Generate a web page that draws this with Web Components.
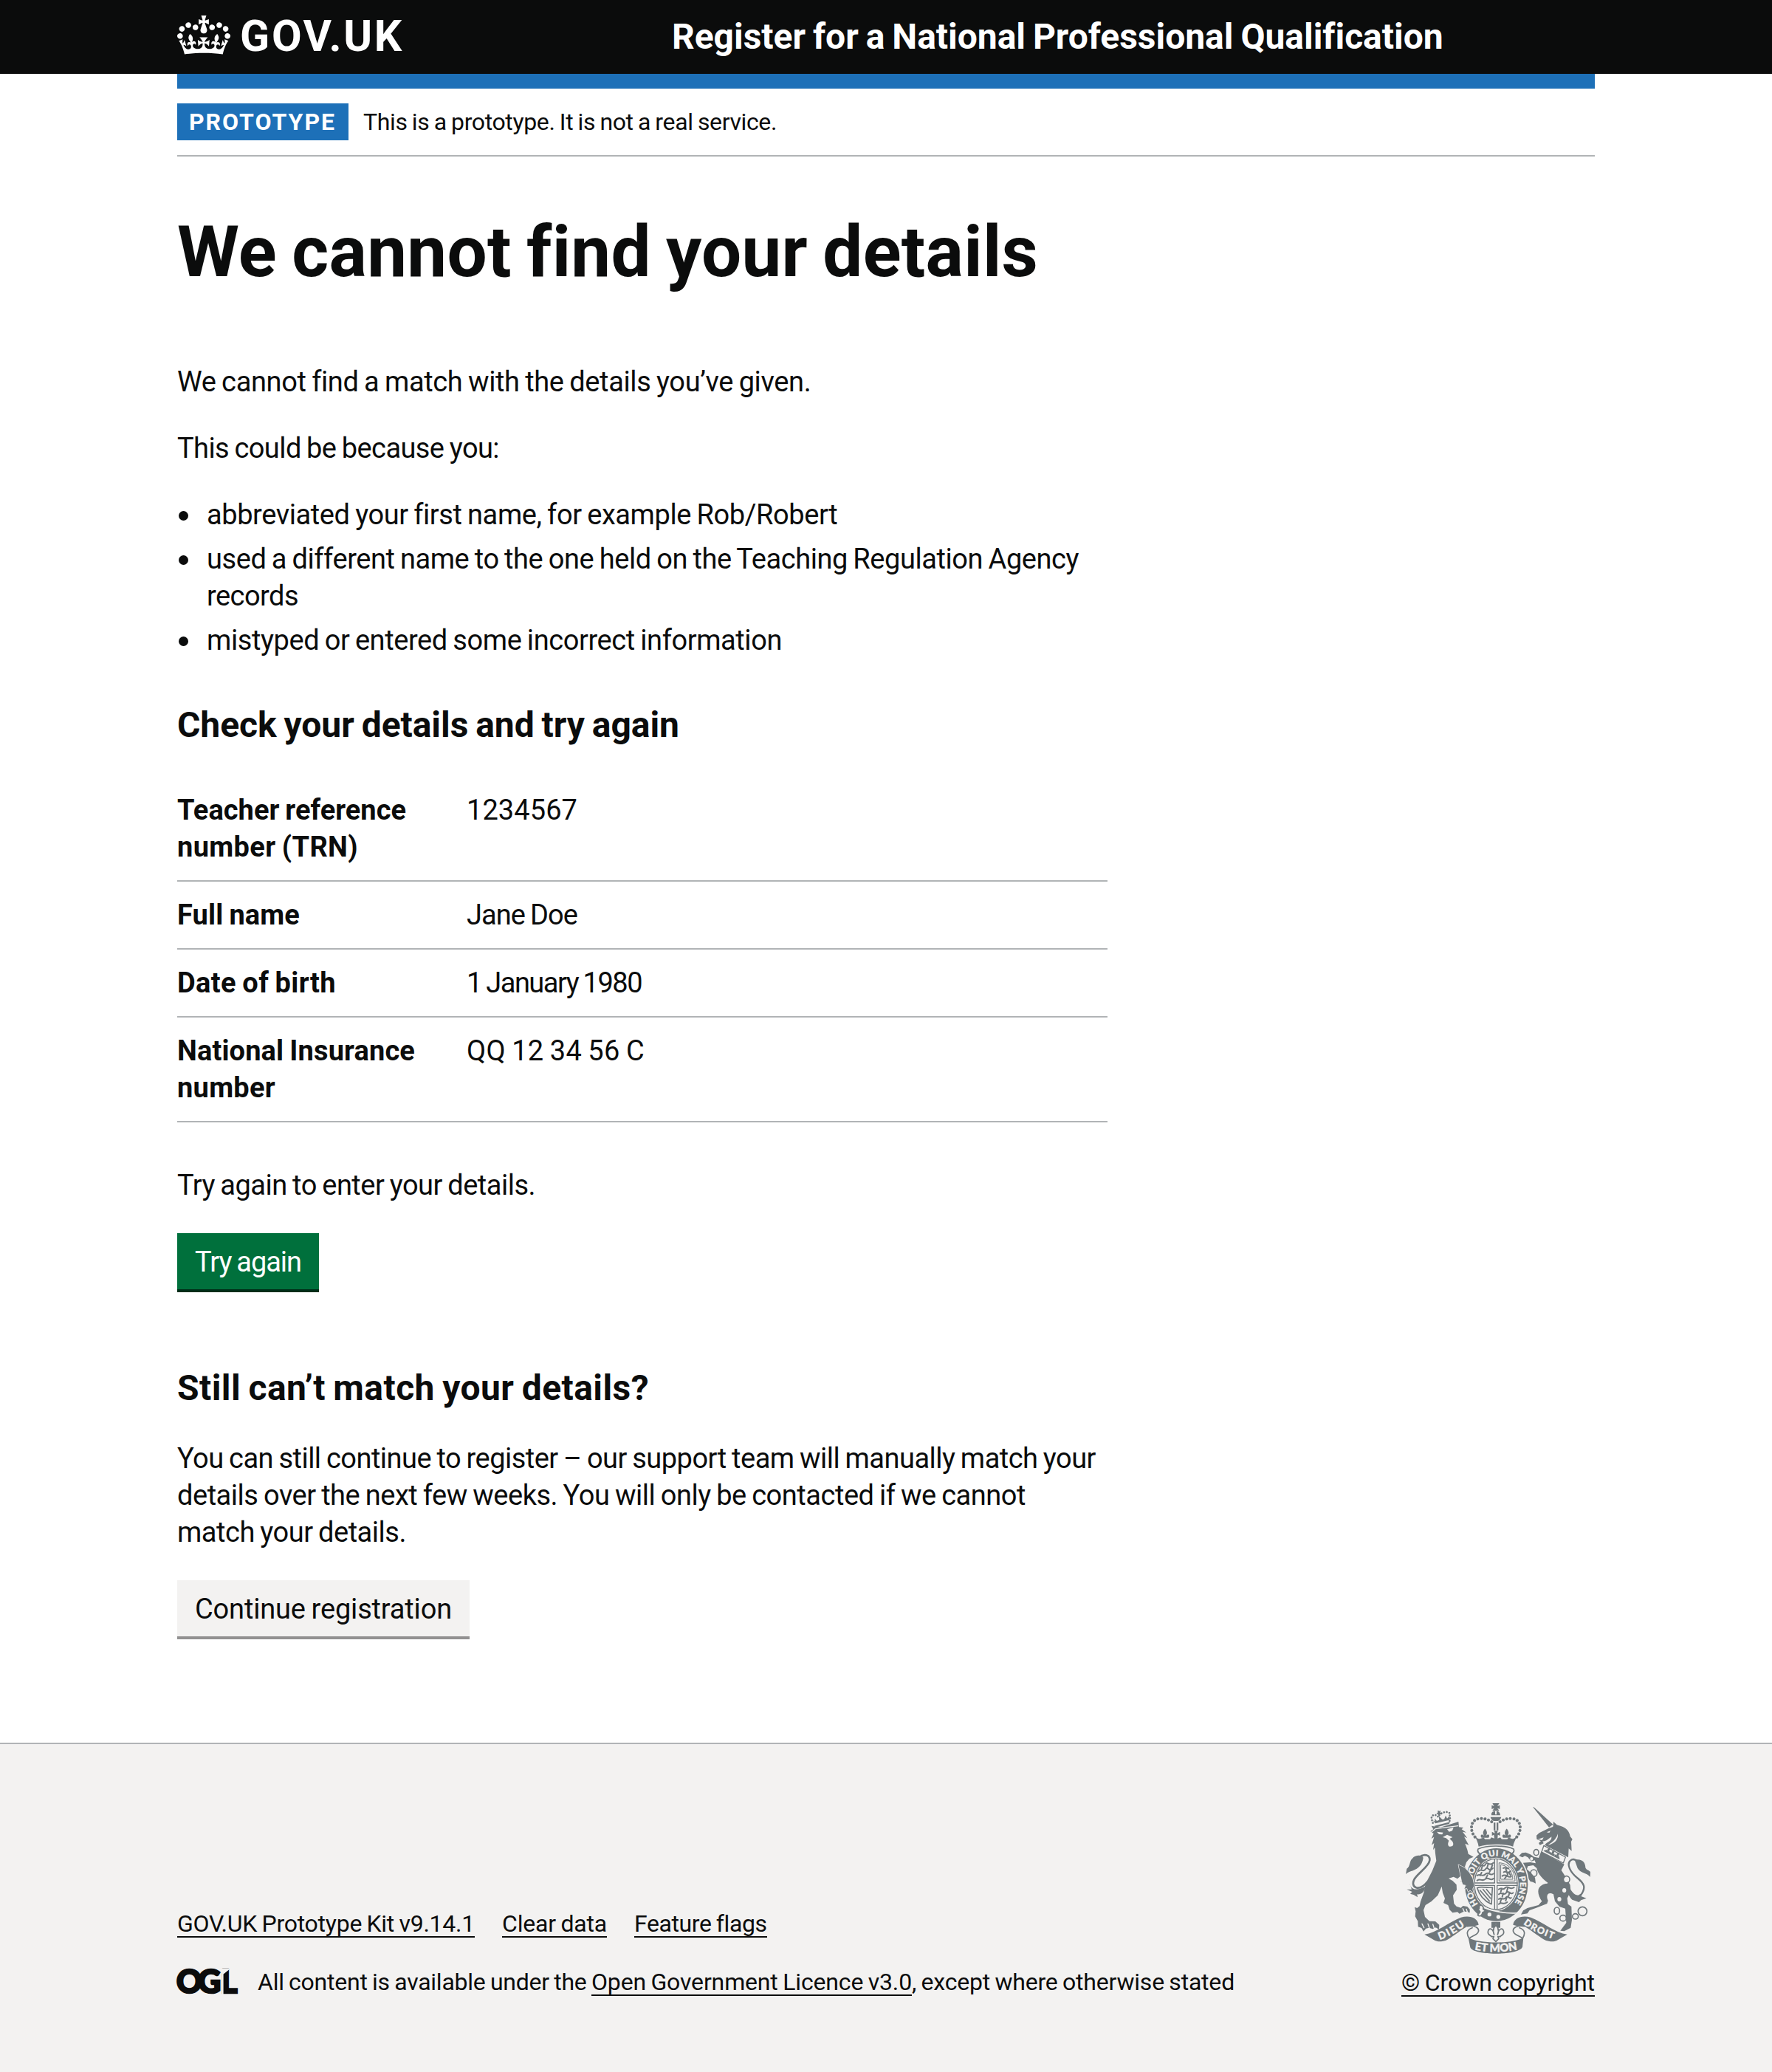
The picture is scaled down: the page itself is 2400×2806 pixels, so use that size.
<!DOCTYPE html>
<html lang="en">
<head>
<meta charset="utf-8">
<title>We cannot find your details – Register for a National Professional Qualification</title>
<style>
html { background: #f3f2f1; }
body { margin: 0; background: #fff; color: #0b0c0c; font-family: Roboto, "Liberation Sans", sans-serif; font-size: 38px; line-height: 50px; }
</style>
</head>
<body>
<npq-page></npq-page>
<script>
function define(name, html) {
  const template = document.createElement('template');
  template.innerHTML = html;
  customElements.define(name, class extends HTMLElement {
    connectedCallback() {
      if (this.shadowRoot) return;
      this.attachShadow({ mode: 'open' }).append(template.content.cloneNode(true));
    }
  });
}

define('crown-mark', `
<style>:host{display:block;width:72px;height:53px}svg{display:block;width:72px;height:53px}</style>
<svg viewBox="0 0 132 97" fill="#fff" aria-hidden="true"><path fill-rule="evenodd" d="M25 30.2c3.5 1.5 7.7-.2 9.1-3.7 1.5-3.6-.2-7.8-3.9-9.2-3.6-1.4-7.6.3-9.1 3.9-1.4 3.5.3 7.5 3.9 9zM9 39.5c3.6 1.5 7.8-.2 9.2-3.7 1.5-3.6-.2-7.8-3.9-9.1-3.6-1.5-7.6.2-9.1 3.8-1.4 3.5.3 7.5 3.8 9zM4.4 57.2c3.5 1.5 7.7-.2 9.1-3.8 1.5-3.6-.2-7.7-3.9-9.1-3.5-1.5-7.6.3-9.1 3.8-1.4 3.5.3 7.6 3.9 9.1zm38.3-21.4c3.5 1.5 7.7-.2 9.1-3.8 1.5-3.6-.2-7.7-3.9-9.1-3.6-1.5-7.6.3-9.1 3.8-1.3 3.6.4 7.7 3.9 9.1zm64.4-5.6c-3.6 1.5-7.8-.2-9.1-3.7-1.5-3.6.2-7.8 3.8-9.2 3.6-1.4 7.7.3 9.2 3.9 1.3 3.5-.4 7.5-3.9 9zm15.9 9.3c-3.6 1.5-7.7-.2-9.1-3.7-1.5-3.6.2-7.8 3.7-9.1 3.6-1.5 7.7.2 9.2 3.8 1.5 3.5-.3 7.5-3.8 9zm4.7 17.7c-3.6 1.5-7.8-.2-9.2-3.8-1.5-3.6.2-7.7 3.9-9.1 3.6-1.5 7.7.3 9.2 3.8 1.3 3.5-.4 7.6-3.9 9.1zM89.3 35.8c-3.6 1.5-7.8-.2-9.2-3.8-1.4-3.6.2-7.7 3.9-9.1 3.6-1.5 7.7.3 9.2 3.8 1.4 3.6-.3 7.7-3.9 9.1zM69.7 17.7l8.9 4.7V9.3l-8.9 2.8c-.2-.3-.5-.6-.9-.9L72.4 0H59.6l3.5 11.2c-.3.3-.6.5-.9.9l-8.8-2.8v13.1l8.8-4.7c.3.3.6.7.9.9l-5 15.4v.1c-.2.8-.4 1.6-.4 2.4 0 4.1 3.1 7.5 7 8.1h.2c.3 0 .7.1 1 .1.4 0 .7 0 1-.1h.2c4-.6 7.1-4.1 7.1-8.1 0-.8-.1-1.7-.4-2.4V34l-5.1-15.4c.4-.2.7-.6 1-.9zM66 92.8c16.9 0 32.8 1.1 47.1 3.2 4-16.9 8.9-26.7 14-33.5l-9.6-3.4c1 4.9 1.1 7.2 0 10.2-1.5-1.4-3-4.3-4.2-8.7L108.6 76c2.8-2 5-3.2 7.5-3.3-4.4 9.4-10 11.9-13.6 11.2-4.3-.8-6.3-4.6-5.6-7.9 1-4.7 5.7-5.9 8-.5 4.3-8.7-3-11.4-7.6-8.8 7.1-7.2 7.9-13.5 2.1-21.1-8 6.1-8.1 12.3-4.5 20.8-4.7-5.4-12.1-2.5-9.5 6.2 3.4-5.2 7.9-2 7.2 3.1-.6 4.3-6.4 7.8-13.5 7.2-10.3-.9-10.9-8-11.2-13.8 2.5-.5 7.1 1.8 11 7.3L80.2 60c-4.1 4.4-8 5.3-12.3 5.4 1.4-4.4 8-11.6 8-11.6H55.5s6.4 7.2 7.9 11.6c-4.2-.1-8-1-12.3-5.4l1.4 16.4c3.9-5.5 8.5-7.7 10.9-7.3-.3 5.8-.9 12.8-11.1 13.8-7.2.6-12.9-2.9-13.5-7.2-.7-5 3.8-8.3 7.1-3.1 2.7-8.7-4.6-11.6-9.4-6.2 3.7-8.5 3.6-14.7-4.6-20.8-5.8 7.6-5 13.9 2.2 21.1-4.7-2.6-11.9.1-7.7 8.8 2.3-5.5 7.1-4.2 8.1.5.7 3.3-1.3 7.1-5.7 7.9-3.5.7-9-1.8-13.5-11.2 2.5.1 4.7 1.3 7.5 3.3l-4.7-15.4c-1.2 4.4-2.7 7.2-4.3 8.7-1.1-3-.9-5.3 0-10.2l-9.5 3.4c5 6.9 9.9 16.7 14 33.5 14.8-2.1 30.8-3.2 47.7-3.2z"/></svg>`);

define('site-header', `
<style>
:host{display:block;background:#0b0c0c;color:#fff;height:100px}
.in{width:1920px;margin:0 auto;display:grid;grid-template-columns:670px 1fr;height:100px}
.logo{display:flex;align-items:flex-start;gap:13px;padding-top:21px}
.word{font-weight:700;font-size:59px;line-height:60px;margin-top:-2px}
.title{font-weight:700;font-size:48px;line-height:60px;padding-top:20px}
</style>
<div class="in"><div class="logo"><crown-mark></crown-mark><span class="word"><fit-line w="222">GOV.UK</fit-line></span></div>
<div class="title"><fit-line w="1044">Register for a National Professional Qualification</fit-line></div></div>`);

define('phase-banner', `
<style>
:host{display:flex;width:1920px;margin:0 auto;box-sizing:border-box;border-top:20px solid #1d70b8;border-bottom:2px solid #b1b4b6;padding:20px 0;font-size:32px;line-height:50px;gap:20px}
b{background:#1d70b8;color:#fff;width:232px;box-sizing:border-box;padding-left:16px;height:50px}
</style><b><fit-line w="199">PROTOTYPE</fit-line></b><slot></slot>`);

define('summary-row', `
<style>
:host{display:grid;grid-template-columns:392px 1fr;padding:20px 0;border-bottom:2px solid #b1b4b6}
:host(:first-child){padding-top:0}
.k{font-weight:700}
</style><div class="k"><slot name="key"></slot></div><div><slot></slot></div>`);

define('govuk-button', `
<style>
:host{display:block;width:fit-content;height:76px;box-sizing:border-box;padding:14px 24px 12px;background:#00703c;color:#fff;box-shadow:0 4px 0 #002d18}
:host([secondary]){background:#f3f2f1;color:#0b0c0c;box-shadow:0 4px 0 #929191}
</style><slot></slot>`);

define('bullet-item', `
<style>
:host{display:flex}
i{width:13px;height:13px;border-radius:50%;background:currentColor;margin:20px 25px 0 2px;flex:none}
</style><i></i><div><slot></slot></div>`);

define('ogl-logo', `
<style>:host{display:block;width:83px;height:36px}svg{display:block;overflow:visible}text{font:900 43px Lato,sans-serif;fill:#0b0c0c;stroke:#0b0c0c;stroke-width:2.6px}</style>
<svg width="84" height="36" viewBox="0 0 84 36"><text x="-1 28 59" y="33">OGL</text><path fill="#f3f2f1" d="M59 0H72L62.6 7.5V35H60.8V8Z"/></svg>`);

define('royal-arms', `
<style>:host{display:block;width:250px;height:204px}svg{display:block;overflow:visible}
text{font-family:Lato,"Noto Sans",sans-serif;font-weight:900;fill:#f3f2f1}</style>
<svg width="250" height="204" viewBox="72 66 750 612" fill="#6f777b" stroke-linejoin="round" stroke-linecap="round" aria-hidden="true">
<defs>
<path id="belt" d="M438 513A98 116 0 0 1 340 397A98 116 0 0 1 438 281A98 116 0 0 1 536 397A98 116 0 0 1 438 513"/>
<path id="dieu" d="M210 621Q262 604 322 557"/>
<path id="droit" d="M549 556Q590 590 680 621"/>
<path id="mon" d="M345 660Q438 680 531 660"/>
<g id="fleur"><path d="M0-22C9-12 9-3 3 4C12-6 20 2 13 11H-13C-20 2-12-6-3 4C-9-3-9-12 0-22Z"/></g>
</defs>
<!-- lion -->
<path d="M172 180L184 172 176 158 213 164 286 141 288 163 306 165 299 172 318 185 303 182 322 208 309 202 328 236 313 230 322 255 326 272 347 284 330 292 318 306 312 324 327 348 342 372 348 402 342 414 345 427 333 418 326 424 322 410 311 412 318 399 306 396 302 386 295 383 302 373 294 362 282 373 266 365 246 372 262 381 278 397 279 418 264 440 268 474 278 485 296 491 304 483 322 486 332 497 332 511 318 506 304 508 290 515 282 508 262 511 250 499 244 480 225 471 231 453 222 430 218 404 202 440 176 465 152 480 144 500 150 528 168 545 192 546 208 560 207 579 194 571 182 577 166 572 154 575 144 587 136 573 122 568 121 545 110 526 112 505 108 488 118 492 128 484 132 466 145 430 152 394 180 340 196 300 192 270 190 246 183 256 187 228 177 236 187 203 176 210 185 190Z"/>
<path fill="#f3f2f1" d="M198 182L224 185 220 193 207 192ZM240 172L266 164 261 178 248 182ZM222 204L240 194 262 204 250 210 262 222C270 238 260 243 250 242C240 238 244 226 247 218L236 208Z"/>
<path fill="none" stroke="#f3f2f1" stroke-width="4" d="M176 184L192 170 284 158M162 556L168 574M182 558L188 576M138 556L146 572M304 494L310 508M318 496L322 508"/>
<path d="M188 158L252 142 248 150 194 164ZM182 136L192 148 249 134 250 118 240 128 234 116 228 131 220 132 206 118 208 134 198 138 190 128 190 140Z"/>
<path fill="none" stroke="#6f777b" stroke-width="8" stroke-dasharray=".1 11" d="M182 146L176 128C178 112 192 108 204 122C208 108 236 94 250 106L252 128L250 138"/>
<path d="M202 95L210 98 214 95 212 104 218 106 212 111 208 118 202 111 196 108 202 104Z"/>
<path fill="none" stroke="#6f777b" stroke-width="8" d="M160 385C125 428 90 408 106 376C120 350 166 324 169 298C171 274 145 270 125 286"/>
<path d="M143 288C140 276 112 274 99 290C85 302 92 320 76 332L72 355C82 340 104 344 124 326C138 314 140 302 143 288ZM88 392C94 422 122 420 152 404C148 426 134 438 118 436L120 448 104 438 90 434 98 426 76 416 96 416Z"/>
<!-- unicorn -->
<path d="M588 81L594 83 670 152 654 164ZM652 168L670 162 672 141 686 154 700 158C724 164 738 182 740 201L749 212 744 222 746 260 734 250 732 286 637 236C645 222 666 222 664 202C650 212 642 222 628 220L632 229 617 236 612 228 621 220 604 212 603 197 614 187Z"/>
<path fill="#f3f2f1" d="M644 184L660 178 655 186ZM690 190C692 212 680 230 650 236C672 222 684 210 690 190ZM608 213L632 205 626 216Z"/>
<path d="M622 262L716 314 704 338 723 368 740 398 742 424 728 452 731 476 745 486 747 540 742 572 716 586 700 584 712 568 724 552 720 494 696 486 678 464 672 436C650 424 640 440 650 462L646 474 606 490 575 501 566 514 540 518 549 502 566 492 611 480 625 464C608 440 602 410 626 398C638 392 644 394 650 390C620 368 606 345 604 330L590 318 568 322 564 334 582 350 597 368 600 392 588 386 578 384 566 366 557 352 546 330 548 308 578 306 600 310 596 298 582 302 568 286 556 280 546 286 532 280 544 268 560 266 578 274 594 284 612 288Z"/>
<path fill="#f3f2f1" stroke="#6f777b" stroke-width="4" d="M633 238L721 285 712 309 624 264Z"/>
<g transform="translate(650 259) rotate(28) scale(.68)"><use href="#fleur"/><use href="#fleur" x="31"/><use href="#fleur" x="63"/><path d="M-22 8H84V14H-22Z"/></g>
<path fill="none" stroke="#6f777b" stroke-width="7" d="M783 440C806 408 796 392 772 372C738 346 724 312 742 298C750 291 762 295 772 304"/>
<path d="M758 296C790 290 802 308 802 328C805 338 818 338 822 346L821 366C808 346 784 354 770 330ZM728 390C742 420 754 440 772 440L790 430 784 444 806 452 784 460 776 468 748 458C734 446 728 426 728 390Z"/>
<g fill="none" stroke="#6f777b" stroke-width="5"><ellipse cx="602" cy="266" rx="10" ry="12"/><ellipse cx="592" cy="350" rx="13" ry="14"/><ellipse cx="725" cy="376" rx="13" ry="14"/><ellipse cx="686" cy="503" rx="11" ry="14"/><ellipse cx="711" cy="533" rx="13" ry="12"/><ellipse cx="761" cy="526" rx="12" ry="11"/><circle cx="790" cy="505" r="18"/></g>
<g fill="#f3f2f1"><ellipse cx="725" cy="376" rx="10" ry="11"/><ellipse cx="716" cy="420" rx="8" ry="9"/><ellipse cx="696" cy="456" rx="8" ry="9"/><ellipse cx="583" cy="292" rx="6" ry="7"/></g>
<!-- garter and shield -->
<ellipse cx="440" cy="397" rx="133" ry="153" fill="#f3f2f1"/>
<path fill="#f3f2f1" stroke="#6f777b" stroke-width="5" d="M366 252C400 236 476 236 510 252Q516 264 500 274M366 252Q360 264 376 274"/>
<ellipse cx="440" cy="397" rx="128" ry="148"/>
<ellipse cx="438" cy="395" rx="92" ry="108" fill="#f3f2f1"/>
<ellipse cx="438" cy="395" rx="87" ry="103" fill="none" stroke="#6f777b" stroke-width="4"/>
<path fill="none" stroke="#6f777b" stroke-width="4" d="M433 293V390H351M443 293V390H525M351 400H433V496M443 496V400H525"/>
<g fill="none" stroke="#6f777b" stroke-width="6">
<path d="M374 322C382 308 388 330 396 314S408 326 428 308M368 342C378 328 386 350 396 334S410 350 426 330M362 360C374 350 384 368 396 354S414 366 428 352M362 380C374 370 384 386 396 374S414 386 428 372M384 318L380 332M406 316L402 330M418 334L412 346M380 348L374 360M404 358L398 370M424 318L418 332"/>
<path stroke-width="3" d="M452 308C492 310 515 340 516 382H452ZM459 316C486 318 506 346 507 375H459Z"/>
<path d="M468 330C480 322 484 336 490 330M470 346C478 338 484 356 498 342M464 362C480 350 486 372 500 364M478 332L486 356 474 372M492 350L498 358"/>
<path stroke-width="5" d="M362 410C380 402 400 412 424 408L420 476C398 466 374 450 362 410M374 420L412 464M386 416L416 452M400 416L418 438"/>
<path d="M450 416C460 404 466 424 476 410S494 422 512 408M450 436C460 424 470 444 480 430S496 442 508 430M450 456C460 444 468 464 478 450S494 460 500 450M450 476C460 464 468 482 484 468M462 412L458 426M486 412L482 426M468 432L464 446M494 428L490 442M460 456L456 468M482 450L478 462"/></g>
<text font-size="34" stroke="#f3f2f1" stroke-width="1"><textPath href="#belt" startOffset="84" textLength="56">HO</textPath></text>
<text font-size="34" stroke="#f3f2f1" stroke-width="1"><textPath href="#belt" startOffset="190" textLength="392">SOIT QUI MAL Y PENSE</textPath></text>
<path stroke="#f3f2f1" stroke-width="4" paint-order="stroke" d="M286 316L310 328 328 346 343 370 350 402 343 414 346 428 333 419 326 426 321 412 310 413 317 399 304 396 300 384Z"/>
<path fill="none" stroke="#f3f2f1" stroke-width="5" d="M374 482C406 500 470 516 524 512"/>
<path fill="#f3f2f1" stroke="#6f777b" stroke-width="5" d="M372 482C382 476 390 490 386 496L396 504 384 510C382 524 372 528 364 520L374 508 366 496C376 494 366 488 372 482Z"/>
<g fill="#f3f2f1"><circle cx="412" cy="518" r="8"/><circle cx="448" cy="528" r="8"/></g>
<!-- crown -->
<path d="M424 66H452L444 78 454 74V90L444 86 452 97H424L431 86 421 90V74L431 78ZM420 108C422 98 434 98 435 98V112H441V98C450 98 455 104 456 115H420ZM416 122H460C456 136 448 138 438 138S420 136 416 122Z"/>
<path fill="none" stroke="#6f777b" stroke-width="12" stroke-dasharray=".1 14.6" d="M353 203C330 175 334 130 375 128C396 128 410 134 422 142M523 203C546 175 542 130 501 128C480 128 466 134 454 142"/>
<path d="M429 145H436V176H429ZM441 145H448V176H441ZM352 196C362 216 376 212 388 205L394 212H414L420 205 432 209 430 194 422 198V182L434 188 431 178H446L443 188 455 182V198L446 194 445 209 456 205 462 212H484L490 205C502 212 514 216 524 196C518 216 510 226 508 242C470 230 406 230 368 242C366 226 358 212 352 196Z"/>
<use href="#fleur" transform="translate(394 194) scale(1.1)"/><use href="#fleur" transform="translate(482 194) scale(1.1)"/>
<!-- ribbon -->
<path d="M148 599C196 594 246 548 296 530C330 520 364 530 368 560L346 566 322 566C290 584 256 614 234 624C214 630 200 628 192 625Z"/>
<path d="M728 599C680 594 630 548 580 530C546 520 512 530 508 560L530 566 554 566C586 584 620 614 642 624C662 630 676 628 684 625Z"/>
<path fill="#f3f2f1" stroke="#6f777b" stroke-width="5" d="M322 566C350 560 374 572 366 590C358 606 336 604 330 616C318 598 318 580 342 572M554 566C526 560 502 572 510 590C518 606 540 604 546 616C558 598 558 580 534 572"/>
<path d="M326 612C366 638 510 638 550 612L546 650C530 686 346 686 334 652Z"/>
<text font-size="42" stroke="#f3f2f1" stroke-width="1"><textPath href="#dieu" textLength="118">DIEU</textPath></text>
<text font-size="38" stroke="#f3f2f1" stroke-width="1"><textPath href="#droit" textLength="136">DROIT</textPath></text>
<text font-size="45" stroke="#f3f2f1" stroke-width="1"><textPath href="#mon" startOffset="6" textLength="176">ET MON</textPath></text>
<!-- pendant fleur-de-lis -->
<path d="M420 548H456V572H447L438 556 429 572H420Z"/>
<path fill="#f3f2f1" stroke="#6f777b" stroke-width="5" d="M438 560C452 576 450 588 445 600C450 572 468 570 470 588C472 602 458 602 456 608H446L450 616 438 628 426 616 430 608H420C418 602 404 602 406 588C408 570 426 572 431 600C426 588 424 576 438 560Z"/>
</svg>`);

define('site-footer', `
<style>
:host{display:block;background:#f3f2f1;border-top:2px solid #b1b4b6;height:444px;font-size:32px;line-height:40px}
.in{width:1920px;margin:0 auto;display:flex;justify-content:space-between;padding-top:80px}
.left{display:flex;flex-direction:column;gap:40px;padding-top:143px}
.links{display:flex;gap:37px}
.lic{display:flex}
ogl-logo{margin:2px 26px 0 0}
.a{border-bottom:2px solid #0b0c0c;height:39px;display:inline-block;box-sizing:border-box}
.right{display:flex;flex-direction:column;align-items:center;width:262px}
.right .a{margin-top:19px}
</style>
<div class="in"><div class="left">
<div class="links"><span class="a"><fit-line w="403">GOV.UK Prototype Kit v9.14.1</fit-line></span><span class="a"><fit-line w="142">Clear data</fit-line></span><span class="a"><fit-line w="179">Feature flags</fit-line></span></div>
<div class="lic"><ogl-logo></ogl-logo><fit-line w="452">All content is available under the&nbsp;</fit-line><span class="a"><fit-line w="434">Open Government Licence v3.0</fit-line></span><fit-line w="437">, except where otherwise stated</fit-line></div>
</div><div class="right"><royal-arms></royal-arms><span class="a"><fit-line w="262">© Crown copyright</fit-line></span></div></div>`);

define('npq-page', `
<style>
:host{display:block}
main{display:block;width:1920px;margin:0 auto;height:2148px}
.col{width:1260px}
h1{font-size:96px;line-height:100px;margin:0 0 101px;padding-top:79px}
h2{font-size:48px;line-height:60px;margin:0}
p{margin:0 0 40px}
.list{display:flex;flex-direction:column;gap:10px;margin-bottom:60px}
.rows{margin:60px 0}
.again{margin-bottom:104px}
.still{margin-bottom:40px}
</style>
<site-header></site-header>
<phase-banner><fit-line w="560">This is a prototype. It is not a real service.</fit-line></phase-banner>
<main><div class="col">
<h1><fit-line w="1165">We cannot find your details</fit-line></h1>
<p><fit-line w="857">We cannot find a match with the details you’ve given.</fit-line></p>
<p><fit-line w="436">This could be because you:</fit-line></p>
<div class="list">
<bullet-item><fit-line w="853">abbreviated your first name, for example Rob/Robert</fit-line></bullet-item>
<bullet-item><fit-line w="1181">used a different name to the one held on the Teaching Regulation Agency</fit-line><br><fit-line w="124">records</fit-line></bullet-item>
<bullet-item><fit-line w="779">mistyped or entered some incorrect information</fit-line></bullet-item>
</div>
<h2><fit-line w="680">Check your details and try again</fit-line></h2>
<div class="rows">
<summary-row><span slot="key"><fit-line w="310">Teacher reference</fit-line><br><fit-line w="245">number (TRN)</fit-line></span><fit-line w="150">1234567</fit-line></summary-row>
<summary-row><span slot="key"><fit-line w="166">Full name</fit-line></span><fit-line w="150">Jane Doe</fit-line></summary-row>
<summary-row><span slot="key"><fit-line w="215">Date of birth</fit-line></span><fit-line w="237">1 January 1980</fit-line></summary-row>
<summary-row><span slot="key"><fit-line w="322">National Insurance</fit-line><br><fit-line w="133">number</fit-line></span><fit-line w="241">QQ 12 34 56 C</fit-line></summary-row>
</div>
<p><fit-line w="485">Try again to enter your details.</fit-line></p>
<govuk-button class="again"><fit-line w="144">Try again</fit-line></govuk-button>
<h2 class="still"><fit-line w="639">Still can’t match your details?</fit-line></h2>
<p><fit-line w="1244">You can still continue to register – our support team will manually match your</fit-line><br><fit-line w="1149">details over the next few weeks. You will only be contacted if we cannot</fit-line><br><fit-line w="310">match your details.</fit-line></p>
<govuk-button secondary><fit-line w="348">Continue registration</fit-line></govuk-button>
</div></main>
<site-footer></site-footer>`);

/* One line of text, tracked so that it fills the width given in "w". Defined last so every parent is styled when it measures. */
customElements.define('fit-line', class extends HTMLElement {
  connectedCallback() {
    this.attachShadow({ mode: 'open' }).innerHTML = '<style>:host{display:inline-block;white-space:nowrap;vertical-align:top}</style><slot></slot>';
    this.style.wordSpacing = '-0.04em';
    const gap = Number(this.getAttribute('w')) - this.getBoundingClientRect().width;
    this.style.letterSpacing = (gap / this.textContent.length).toFixed(3) + 'px';
  }
});
</script>
</body>
</html>
